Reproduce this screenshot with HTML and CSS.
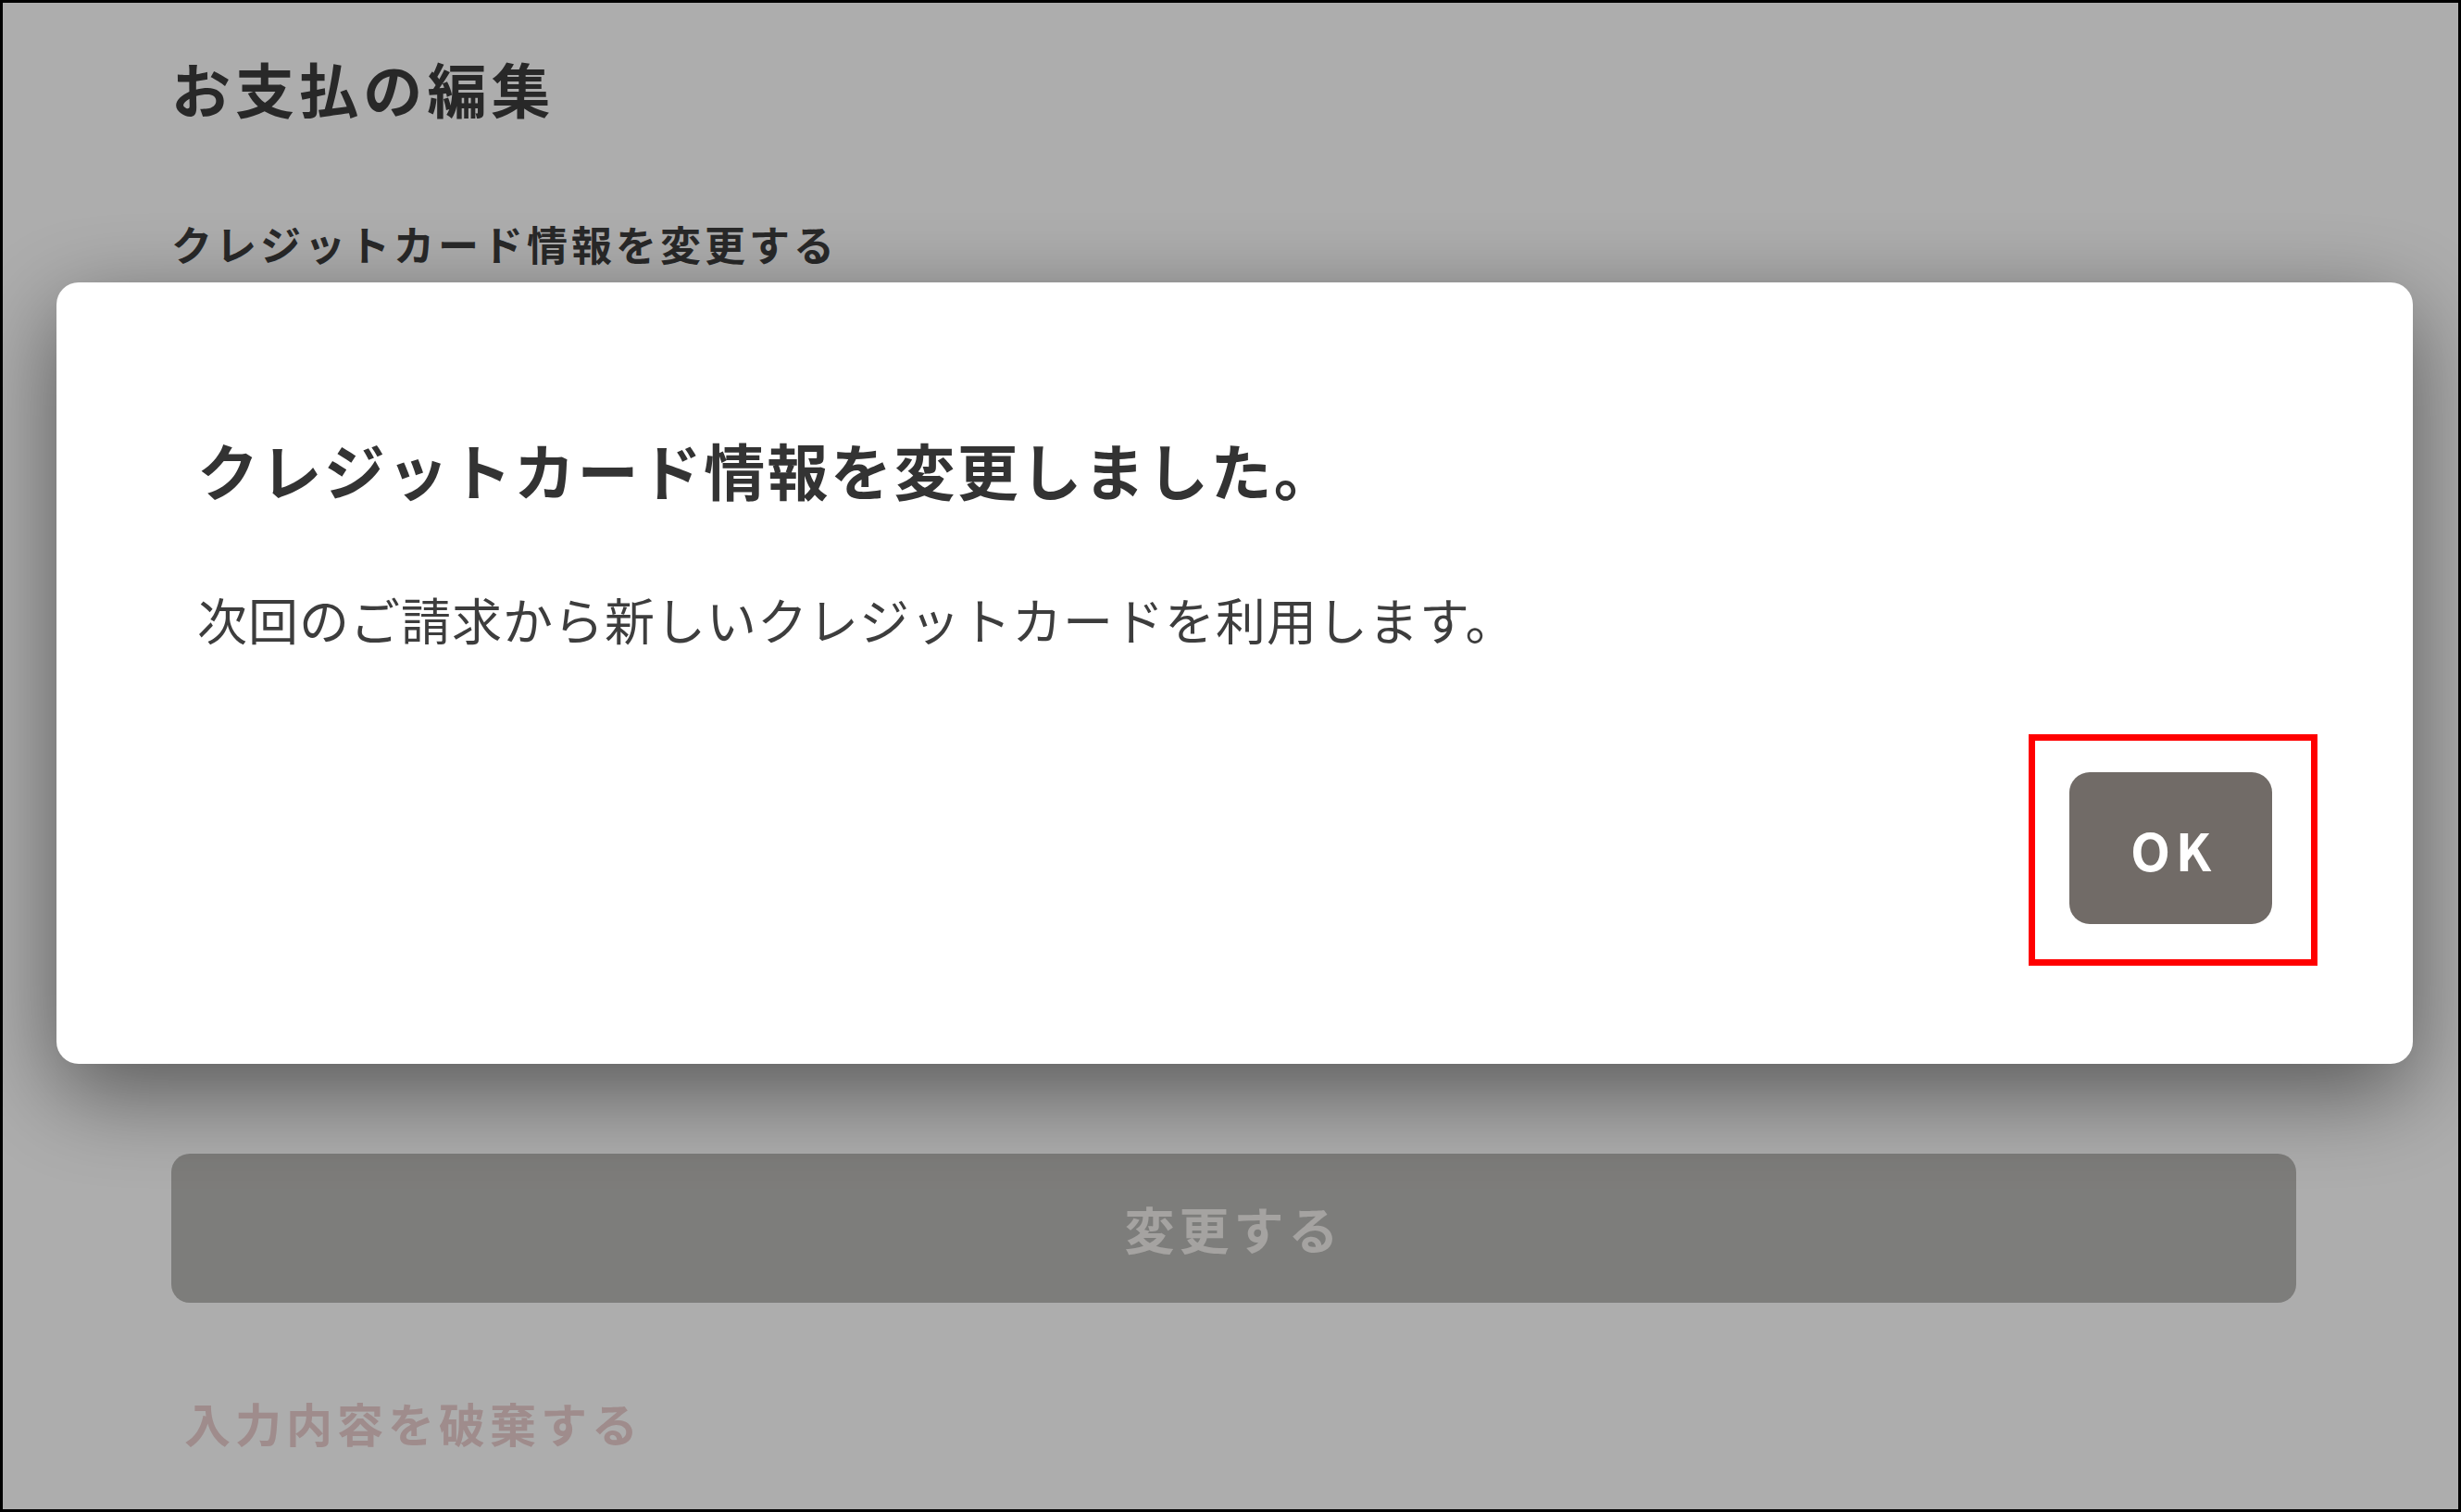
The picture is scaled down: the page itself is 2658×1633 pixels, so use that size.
FILE: index.html
```html
<!DOCTYPE html>
<html lang="ja">
<head>
<meta charset="utf-8">
<title>お支払の編集</title>
<link rel="stylesheet" href="styles.css">
</head>
<body>
  <main class="page">
    <h1 class="page-title">お支払の編集</h1>
    <h2 class="section-title">クレジットカード情報を変更する</h2>
    <button class="submit" type="button" disabled>変更する</button>
    <a class="discard" href="#">入力内容を破棄する</a>
  </main>

  <div class="overlay">
    <div class="modal" role="dialog" aria-modal="true">
      <p class="modal-title">クレジットカード情報を変更しました。</p>
      <p class="modal-text">次回のご請求から新しいクレジットカードを利用します。</p>
      <div class="modal-actions">
        <div class="ok-wrap">
          <button class="ok" type="button">OK</button>
          <span class="highlight"></span>
        </div>
      </div>
    </div>
  </div>
</body>
</html>
```

FILE: styles.css
```css
html, body {
  margin: 0;
  padding: 0;
}

body {
  box-sizing: border-box;
  height: 1633px;
  border: 3px solid #000;
  background: #ffffff;
  font-family: "Noto Sans CJK JP", "Noto Sans", sans-serif;
  overflow: hidden;
}

.page {
  display: flex;
  flex-direction: column;
  align-items: flex-start;
  padding: 46px 175px 0 182px;
}

.page-title {
  margin: 0;
  font-size: 64px;
  line-height: 90px;
  font-weight: 700;
  letter-spacing: 0.08em;
  color: #3c3c3c;
}

.section-title {
  margin: 92px 0 0;
  font-size: 44px;
  line-height: 64px;
  font-weight: 700;
  letter-spacing: 4px;
  color: #3c3c3c;
}

.submit {
  display: flex;
  align-items: center;
  justify-content: center;
  align-self: stretch;
  margin-top: 951px;
  height: 161px;
  border: none;
  border-radius: 20px;
  background: #b9b8b5;
  color: #f3f1ee;
  font-family: "Noto Sans CJK JP", "Noto Sans", sans-serif;
  font-size: 54px;
  font-weight: 700;
  letter-spacing: 5px;
  padding: 0;
}

.discard {
  margin-top: 93px;
  padding-left: 14px;
  font-size: 50px;
  line-height: 72px;
  font-weight: 700;
  letter-spacing: 5px;
  color: #ebcece;
  text-decoration: none;
}

.overlay {
  position: fixed;
  inset: 0;
  background: rgba(0, 0, 0, 0.32);
  display: flex;
  align-items: flex-start;
  padding: 305px 52px 0 61px;
}

.modal {
  flex: 1;
  background: #ffffff;
  border-radius: 24px;
  padding: 153px 152px 151px 152px;
  box-shadow: 0 30px 100px rgba(0, 0, 0, 0.5);
}

.modal-title {
  margin: 0;
  font-size: 66px;
  line-height: 96px;
  font-weight: 700;
  letter-spacing: 2.4px;
  color: #333333;
}

.modal-text {
  margin: 75px 0 0;
  font-size: 54px;
  line-height: 80px;
  font-weight: 400;
  letter-spacing: 1px;
  color: #3d3d3d;
}

.modal-actions {
  display: flex;
  justify-content: flex-end;
  margin-top: 125px;
}

.ok-wrap {
  position: relative;
}

.ok {
  display: flex;
  align-items: center;
  justify-content: center;
  width: 219px;
  height: 164px;
  border: none;
  border-radius: 22px;
  background: #716b67;
  color: #ffffff;
  font-family: "Noto Sans CJK JP", "Noto Sans", sans-serif;
  font-size: 56px;
  font-weight: 700;
  letter-spacing: 0.1em;
  padding: 0 0 0 0.1em;
}

.highlight {
  position: absolute;
  top: -41px;
  left: -44px;
  right: -49px;
  bottom: -45px;
  border: 7px solid #ff0000;
  pointer-events: none;
}
```
